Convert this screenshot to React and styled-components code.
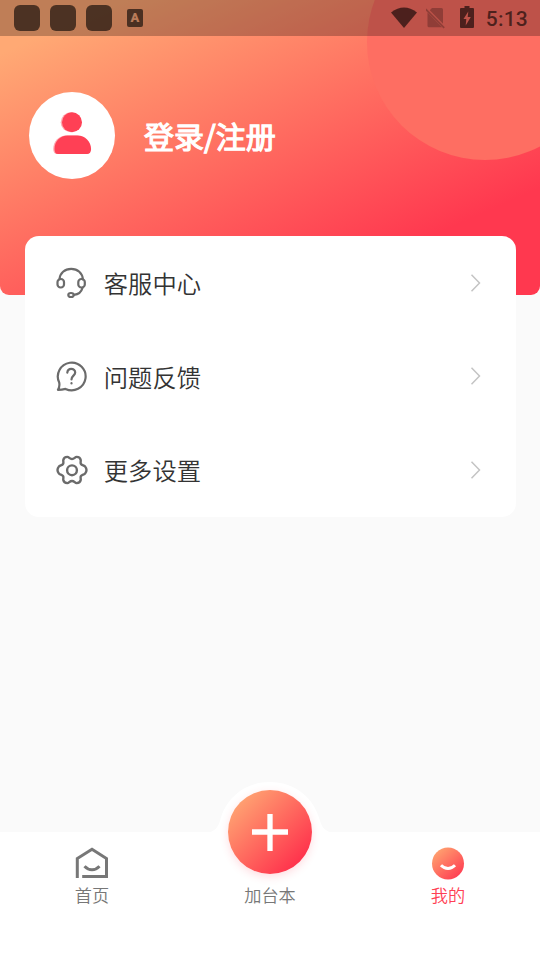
import React from 'react';
import styled, { createGlobalStyle } from 'styled-components';

const GlobalStyle = createGlobalStyle`
  * {
    box-sizing: border-box;
  }
  body {
    margin: 0;
    background: #fafafa;
    font-family: "Noto Sans CJK SC", sans-serif;
  }
  svg {
    display: block;
    flex-shrink: 0;
  }
`;

const Screen = styled.div`
  width: 540px;
  height: 960px;
  display: flex;
  flex-direction: column;
  overflow: hidden;
  background: #fafafa;
`;

const Header = styled.header`
  position: relative;
  height: 295px;
  flex-shrink: 0;
  overflow: hidden;
  border-radius: 0 0 9px 9px;
  background: linear-gradient(156deg, #ffa974 10%, #ff384f 80%);
`;

const HeaderCircle = styled.div`
  position: absolute;
  left: 367px;
  top: -76px;
  width: 236px;
  height: 236px;
  border-radius: 50%;
  background: #fe6e62;
`;

const StatusBar = styled.div`
  position: relative;
  height: 36px;
  padding: 0 12px 0 14px;
  display: flex;
  align-items: center;
  justify-content: space-between;
  background: rgba(0, 0, 0, 0.25);
  color: rgba(0, 0, 0, 0.6);
`;

const StatusGroup = styled.div`
  display: flex;
  align-items: center;
  gap: ${(props) => props.$gap}px;
`;

const AppDot = styled.div`
  width: 26px;
  height: 26px;
  border-radius: 6px;
  background: currentColor;
`;

const InputBadge = styled.div`
  width: 16px;
  height: 18px;
  margin-left: 5px;
  border-radius: 2px;
  background: #4b3022;
  color: #b97b59;
  font: 900 13px/18px Roboto, sans-serif;
  text-align: center;
`;

const Clock = styled.div`
  margin-left: 2px;
  font: 500 21px/36px Roboto, sans-serif;
  letter-spacing: 0.2px;
  padding-top: 2px;
`;

const Profile = styled.div`
  position: relative;
  display: flex;
  align-items: center;
  gap: 29px;
  margin: 56px 0 0 29px;
`;

const Avatar = styled.div`
  width: 86px;
  height: 87px;
  border-radius: 50%;
  background: #fff;
`;

const LoginText = styled.div`
  margin-top: -2px;
  color: #fff;
  font-size: 30px;
  line-height: 44px;
  font-weight: 400;
  -webkit-text-stroke: 1.2px #fff;
`;

const Menu = styled.main`
  position: relative;
  width: 491px;
  height: 281px;
  margin: -59px 0 0 24.5px;
  flex-shrink: 0;
  border-radius: 14px;
  background: #fff;
`;

const MenuRow = styled.div`
  height: 93.6px;
  display: flex;
  align-items: center;
  padding: 0 33.500px 0 30.500px;
`;

const MenuLabel = styled.div`
  flex: 1;
  margin-left: 14.8px;
  padding-top: 1px;
  color: #333;
  font-size: 24.3px;
  line-height: 36px;
  font-weight: 350;
`;

const TabBar = styled.nav`
  position: relative;
  height: 128px;
  margin-top: auto;
  display: grid;
  grid-template-columns: 184px 172px 184px;
  background: #fff;
`;

const Tab = styled.div`
  display: flex;
  flex-direction: column;
  align-items: center;
  padding-top: 14px;
  color: ${(props) => (props.$active ? '#ff3f55' : '#777')};
`;

const TabLabel = styled.div`
  margin-top: ${(props) => props.$top || 0}px;
  font-size: 17.2px;
  line-height: 26px;
  font-weight: 350;
`;

// The white hump rises out of the tab bar behind the round button
const Hump = styled.svg`
  position: absolute;
  left: 206px;
  top: -51px;
`;

const AddButton = styled.div`
  position: relative;
  width: 84px;
  height: 84px;
  margin-top: -56.5px;
  display: flex;
  align-items: center;
  justify-content: center;
  border-radius: 50%;
  background: linear-gradient(135deg, #ffa974 8%, #ff2f4b 88%);
  box-shadow: 0 3px 9px rgba(255, 56, 79, 0.17);
`;

const UserIcon = () => (
  <svg width="86" height="87" viewBox="0 0 86 87">
    <g fill="#ffabb2">
      <circle cx="41.7" cy="30.2" r="10" />
      <path d="M24.2 57c0-8 6-13.6 13-13.6h10c7 0 13 5.6 13 13.6 0 3-1.5 5-4 5H28c-2.5 0-3.8-2-3.8-5z" />
    </g>
    <g fill="#ff4055">
      <circle cx="43" cy="30.2" r="10" />
      <path d="M25.5 57c0-8 6-13.6 13-13.6h10c7.5 0 13.6 6 13.6 13.6 0 3-1.5 5-4 5h-29c-2.5 0-3.6-2-3.6-5z" />
    </g>
  </svg>
);

const WifiIcon = () => (
  <svg width="26" height="24" viewBox="0 0 26 24" fill="currentColor">
    <path d="M0 6.5Q13-3.5 26 6.5L13 22z" />
  </svg>
);

const NoSimIcon = () => (
  <svg width="34" height="24" viewBox="1 0 34 24" fill="currentColor" opacity="0.4">
    <path d="M7 2h9.500a1.500 1.500 0 0 1 1.500 1.500v14.300L4.800 4.300z" />
    <path d="M2.500 6.500L17 21.300H4a1.500 1.500 0 0 1-1.500-1.500z" />
    <path d="M.6 3.200l18.600 18.600" stroke="currentColor" strokeWidth="1.800" />
  </svg>
);

const BatteryIcon = () => (
  <svg width="24" height="24" viewBox="0 0 24 24" fill="currentColor">
    <path fillRule="evenodd" d="M4.500 0h5v2H13a1 1 0 0 1 1 1v18a1 1 0 0 1-1 1H1a1 1 0 0 1-1-1V3a1 1 0 0 1 1-1h3.500zM8.300 5.500L3.500 13h2.800l-.6 6.500L10.800 11H7.700z" />
  </svg>
);

const HeadsetIcon = () => (
  <svg width="34" height="34" viewBox="0 0 34 34" fill="none" stroke="#6b6b6b" strokeWidth="2.2" strokeLinecap="round">
    <path d="M4.5 13.5C4.8 7 9.8 2.8 16.2 2.8S27.5 7 27.9 13.5" />
    <rect x="2.5" y="13" width="6.5" height="8.5" rx="3.1" />
    <rect x="23.3" y="13" width="6.5" height="8.5" rx="3.1" />
    <path d="M27.5 21.8c-1 4-4.5 6.7-8.6 7" />
    <ellipse cx="16" cy="29" rx="2.7" ry="2" />
  </svg>
);

const QuestionIcon = () => (
  <svg width="34" height="34" viewBox="0 0 34 34" fill="none" stroke="#6b6b6b" strokeWidth="2.2" strokeLinecap="round" strokeLinejoin="round">
    <path d="M4.2 23.5A13.9 13.9 0 1 1 10.5 29.9Q7 30.8 2.9 30.8Q5 28 4.2 23.5" />
    <path d="M12.3 13.6c.3-2.400 1.700-3.700 3.900-3.700s4 1.500 4 3.600c0 3-3.700 3.400-3.700 6.900" />
    <path d="M16.500 24.200v.3" />
  </svg>
);

const GearIcon = () => (
  <svg width="34" height="34" viewBox="0 0 34 34" fill="none" stroke="#6b6b6b" strokeWidth="2.4" strokeLinejoin="round">
    <path d="M12.3 3.9C14.2 3.9 14.5 6 17 6s2.800-2.100 4.700-2.100c2 0 3.600 1.200 4 3 .3 1.500-.6 2.500.2 3.900 1 1.700 3.300 1.300 4.300 2.800.9 1.200 1.300 2.300 1.300 3.400s-.4 2.200-1.300 3.400c-1 1.500-3.300 1.100-4.300 2.800-.8 1.400.1 2.400-.2 3.900-.4 1.800-2 3-4 3-1.900 0-2.200-2.100-4.700-2.100s-2.800 2.100-4.700 2.100c-2 0-3.600-1.200-4-3-.3-1.500.6-2.500-.2-3.900-1-1.700-3.300-1.300-4.300-2.800-.9-1.200-1.300-2.300-1.300-3.400s.4-2.200 1.300-3.400c1-1.500 3.300-1.100 4.300-2.800.8-1.400-.1-2.400.2-3.900.4-1.800 2-3 4-3z" />
    <circle cx="17" cy="17.3" r="4.9" />
  </svg>
);

const ArrowIcon = () => (
  <svg width="12" height="20" viewBox="0 0 12 20" fill="none" stroke="#c4c4c4" strokeWidth="1.5">
    <path d="M1.500 1.700l8 8.300-8 8.300" />
  </svg>
);

const HomeIcon = () => (
  <svg width="34" height="34" viewBox="0 0 34 34" fill="none" stroke="#777" strokeWidth="3">
    <path d="M2.300 32V12.500L17 3.200l14.500 9.300v18H7.200" />
    <path d="M9.500 20.300c4.500 4.700 10.500 4.700 15 0" />
  </svg>
);

const SmileIcon = () => (
  <svg width="34" height="34" viewBox="0 0 34 34" fill="none">
    <defs>
      <linearGradient id="smile" x1="0.15" y1="0.1" x2="0.85" y2="0.9">
        <stop offset="0" stopColor="#ffa06f" />
        <stop offset="1" stopColor="#ff3f53" />
      </linearGradient>
    </defs>
    <circle cx="17" cy="17.5" r="16" fill="url(#smile)" />
    <path d="M10 19.200c4.200 4.300 9.800 4.300 14 0" stroke="#fff" strokeWidth="3" />
  </svg>
);

const menuItems = [
  { label: '客服中心', Icon: HeadsetIcon },
  { label: '问题反馈', Icon: QuestionIcon },
  { label: '更多设置', Icon: GearIcon },
];

const App = () => {
  return (
    <Screen>
      <GlobalStyle />
      <Header>
        <HeaderCircle />
        <StatusBar>
          <StatusGroup $gap={10}>
            <AppDot />
            <AppDot />
            <AppDot />
            <InputBadge>A</InputBadge>
          </StatusGroup>
          <StatusGroup $gap={0}>
            <StatusGroup $gap={9}>
              <WifiIcon />
              <StatusGroup $gap={0}>
                <NoSimIcon />
                <BatteryIcon />
              </StatusGroup>
            </StatusGroup>
            <Clock>5:13</Clock>
          </StatusGroup>
        </StatusBar>
        <Profile>
          <Avatar>
            <UserIcon />
          </Avatar>
          <LoginText>登录/注册</LoginText>
        </Profile>
      </Header>
      <Menu>
        {menuItems.map(({ label, Icon }) => (
          <MenuRow key={label}>
            <Icon />
            <MenuLabel>{label}</MenuLabel>
            <ArrowIcon />
          </MenuRow>
        ))}
      </Menu>
      <TabBar>
        <Hump width="128" height="52" viewBox="0 0 128 52" fill="#fff">
          <path d="M0 52C9 51 12 46 14 40C20 16 40 1 64 1s44 15 50 39c2 6 5 11 14 12z" />
        </Hump>
        <Tab>
          <HomeIcon />
          <TabLabel $top={2}>首页</TabLabel>
        </Tab>
        <Tab>
          <AddButton>
            <svg width="38" height="38" viewBox="0 0 38 38" stroke="#fff" strokeWidth="5.3">
              <path d="M1 19h36M19 1v37" />
            </svg>
          </AddButton>
          <TabLabel $top={8.5}>加台本</TabLabel>
        </Tab>
        <Tab $active>
          <SmileIcon />
          <TabLabel $top={2}>我的</TabLabel>
        </Tab>
      </TabBar>
    </Screen>
  );
};

export default App;
